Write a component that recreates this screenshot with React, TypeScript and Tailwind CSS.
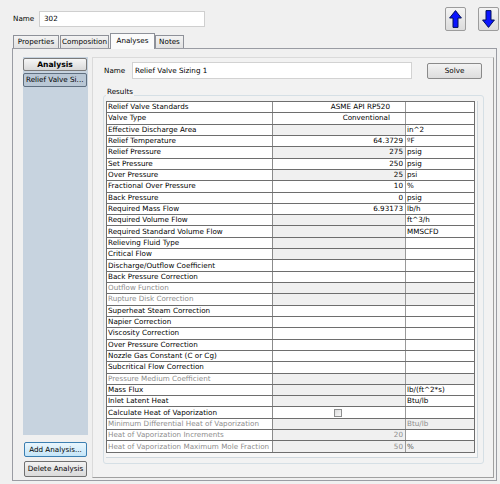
import React from "react";

type Row = {
  l: string;
  v?: string;
  combo?: boolean;
  vg?: boolean;
  ug?: boolean;
  u?: string;
  dis?: boolean;
  vDis?: boolean;
  uCol?: string;
  cb?: boolean;
};

const rows: Row[] = [
  { l: "Relief Valve Standards", v: "ASME API RP520", combo: true },
  { l: "Valve Type", v: "Conventional", combo: true },
  { l: "Effective Discharge Area", vg: true, u: "in^2" },
  { l: "Relief Temperature", v: "64.3729", u: "ºF" },
  { l: "Relief Pressure", v: "275", vg: true, u: "psig" },
  { l: "Set Pressure", v: "250", u: "psig" },
  { l: "Over Pressure", v: "25", vg: true, u: "psi" },
  { l: "Fractional Over Pressure", v: "10", u: "%" },
  { l: "Back Pressure", v: "0", u: "psig" },
  { l: "Required Mass Flow", v: "6.93173", u: "lb/h" },
  { l: "Required Volume Flow", vg: true, u: "ft^3/h" },
  { l: "Required Standard Volume Flow", vg: true, u: "MMSCFD" },
  { l: "Relieving Fluid Type", vg: true },
  { l: "Critical Flow", vg: true },
  { l: "Discharge/Outflow Coefficient" },
  { l: "Back Pressure Correction" },
  { l: "Outflow Function", dis: true, vg: true, ug: true },
  { l: "Rupture Disk Correction", dis: true, vg: true, ug: true },
  { l: "Superheat Steam Correction" },
  { l: "Napier Correction" },
  { l: "Viscosity Correction" },
  { l: "Over Pressure Correction" },
  { l: "Nozzle Gas Constant (C or Cg)" },
  { l: "Subcritical Flow Correction" },
  { l: "Pressure Medium Coefficient", dis: true, vg: true, ug: true },
  { l: "Mass Flux", vg: true, u: "lb/(ft^2*s)" },
  { l: "Inlet Latent Heat", vg: true, u: "Btu/lb" },
  { l: "Calculate Heat of Vaporization", cb: true },
  { l: "Minimum Differential Heat of Vaporization", dis: true, vg: true, ug: true, u: "Btu/lb", uCol: "text-[#8d8d8d]" },
  { l: "Heat of Vaporization Increments", dis: true, vg: true, v: "20", vDis: true },
  { l: "Heat of Vaporization Maximum Mole Fraction", dis: true, vg: true, v: "50", vDis: true, ug: true, u: "%", uCol: "text-[#555555]" },
];

function UpArrow() {
  return (
    <svg width="13" height="18" viewBox="0 0 13 18">
      <polygon
        points="6.5,0.6 12.4,8 9,8 9,17.4 4,17.4 4,8 0.6,8"
        fill="#0a14ff"
        stroke="#00105a"
        strokeWidth="1"
      />
    </svg>
  );
}

function DownArrow() {
  return (
    <svg width="13" height="18" viewBox="0 0 13 18">
      <polygon
        points="6.5,17.4 12.4,10 9,10 9,0.6 4,0.6 4,10 0.6,10"
        fill="#0a14ff"
        stroke="#00105a"
        strokeWidth="1"
      />
    </svg>
  );
}

function Tab({ label, w, sel, ml }: { label: string; w: string; sel?: boolean; ml?: string }) {
  if (sel) {
    return (
      <div
        className={`${w} ${ml ?? ""} h-[16px] -mb-px border border-b-0 border-[#8e9199] bg-[#fbfbfb] flex items-center justify-center pb-[2px] relative z-10`}
      >
        {label}
      </div>
    );
  }
  return (
    <div
      className={`${w} ${ml ?? ""} h-[13px] border border-b-0 border-[#8e9199] bg-linear-to-b from-[#f3f3f3] to-[#e2e2e2] flex items-center justify-center`}
    >
      {label}
    </div>
  );
}

export default function App() {
  return (
    <div className="w-[500px] h-[484px] overflow-hidden bg-[#f0f0f0] text-[7.2px] leading-[10px] text-black font-['DejaVu_Sans',Verdana,sans-serif]">
      {/* top bar */}
      <div className="flex items-center h-[23px] mt-[7px] pl-[13px] pr-px">
        <span className="w-[26px]">Name</span>
        <div className="w-[166px] h-[16px] bg-white border border-[#cfcfcf] flex items-center pl-[4px]">302</div>
        <div className="flex-1" />
        <div className="w-[21px] h-[24px] border border-[#9c9c9c] rounded-[2px] bg-linear-to-b from-[#f4f4f4] to-[#dcdcdc] flex items-center justify-center">
          <UpArrow />
        </div>
        <div className="ml-[12px] w-[21px] h-[24px] border border-[#9c9c9c] rounded-[2px] bg-linear-to-b from-[#f4f4f4] to-[#dcdcdc] flex items-center justify-center">
          <DownArrow />
        </div>
      </div>

      {/* tabs */}
      <div className="flex items-end h-[15px] mt-[3px] pl-[13px] relative z-10">
        <Tab label="Properties" w="w-[46px]" />
        <Tab label="Composition" w="w-[49px]" ml="ml-px" />
        <Tab label="Analyses" w="w-[45px]" ml="ml-px" sel />
        <Tab label="Notes" w="w-[29px]" />
      </div>

      {/* tab panel */}
      <div className="ml-[12px] w-[485px] h-[433px] border border-[#9a9ca3] bg-[#f0f0f0] flex pt-[8px] pl-[10px]">
        {/* left column */}
        <div className="flex flex-col w-[65px]">
          <div className="h-[378px] bg-[#c7d3df] flex flex-col">
            <div className="mt-px h-[13px] w-[64px] border border-[#7a7a7a] rounded-[2px] bg-linear-to-b from-[#f6f6f6] to-[#d9d9d9] font-bold text-[7.6px] flex items-center justify-center">
              Analysis
            </div>
            <div className="mt-[2px] h-[14px] w-[64px] border border-[#5f6f80] rounded-[2px] bg-[#b9c7d5] pl-[2px] flex items-center whitespace-nowrap overflow-hidden">
              Relief Valve Si...
            </div>
          </div>
          <div className="mt-[7px] ml-px w-[63px] h-[15px] border border-[#3c7fb1] rounded-[2px] bg-linear-to-b from-[#eaf6fd] to-[#c4e5f8] flex items-center justify-center whitespace-nowrap">
            Add Analysis...
          </div>
          <div className="mt-[4px] ml-px w-[63px] h-[16px] border border-[#707070] rounded-[2px] bg-linear-to-b from-[#f2f2f2] to-[#dadada] flex items-center justify-center whitespace-nowrap">
            Delete Analysis
          </div>
        </div>

        {/* right sub-panel */}
        <div className="ml-[4px] w-[402px] h-[421px] border-l border-t border-l-[#dadada] border-t-[#dadada] border-r border-b border-r-[#a0a0a0] border-b-[#a0a0a0] bg-[#f2f2f2] flex flex-col pl-[10px]">
          <div className="flex items-center mt-[4px] h-[17px] pl-px">
            <span className="w-[28px]">Name</span>
            <div className="w-[280px] h-[17px] bg-white border border-[#d2d2d2] flex items-center pl-[2px]">
              Relief Valve Sizing 1
            </div>
            <div className="ml-[15px] w-[55px] h-[16px] border border-[#8a8a8a] rounded-[2px] bg-linear-to-b from-[#f3f3f3] to-[#dddddd] flex items-center justify-center">
              Solve
            </div>
          </div>

          {/* Results group */}
          <div className="relative mt-[16px] w-[381px] h-[369px] border border-[#d5dfe5] rounded-[3px] pl-[2px] pt-[5px]">
            <span className="absolute left-[2px] -top-[9px] px-px bg-[#f2f2f2] leading-[9px]">Results</span>
            <div className="w-[372px] h-[357px] bg-[#f7f7f7] border-r border-b border-[#cfd8de]">
              <div className="w-[369px] border-l border-t border-r border-[#6e6e6e] bg-white">
                {rows.map((r, i) => (
                  <div key={i} className="flex h-[11.32px] border-b border-[#6e6e6e]">
                    <div
                      className={`w-[166px] shrink-0 border-r border-[#8c8c8c] pl-px flex items-center whitespace-nowrap overflow-hidden ${
                        r.dis ? "text-[#8d8d8d]" : "text-black"
                      }`}
                    >
                      {r.l}
                    </div>
                    <div
                      className={`w-[133px] shrink-0 border-r border-[#9a9a9a] flex items-center whitespace-nowrap ${
                        r.cb ? "justify-center" : "justify-end"
                      } ${r.combo ? "pr-[15px]" : "pr-[2px]"} ${r.vg ? "bg-[#f0f0f0]" : "bg-white"} ${
                        r.vDis ? "text-[#8d8d8d]" : "text-black"
                      }`}
                    >
                      {r.cb ? (
                        <div className="w-[8px] h-[8px] border border-[#8e8f8f] bg-linear-to-br from-[#dcdcdc] to-[#f8f8f8]" />
                      ) : (
                        r.v ?? ""
                      )}
                    </div>
                    <div
                      className={`flex-1 pl-px flex items-center whitespace-nowrap ${r.ug ? "bg-[#f0f0f0]" : "bg-white"} ${
                        r.uCol ?? "text-black"
                      }`}
                    >
                      {r.u ?? ""}
                    </div>
                  </div>
                ))}
              </div>
            </div>
          </div>
        </div>
      </div>
    </div>
  );
}
